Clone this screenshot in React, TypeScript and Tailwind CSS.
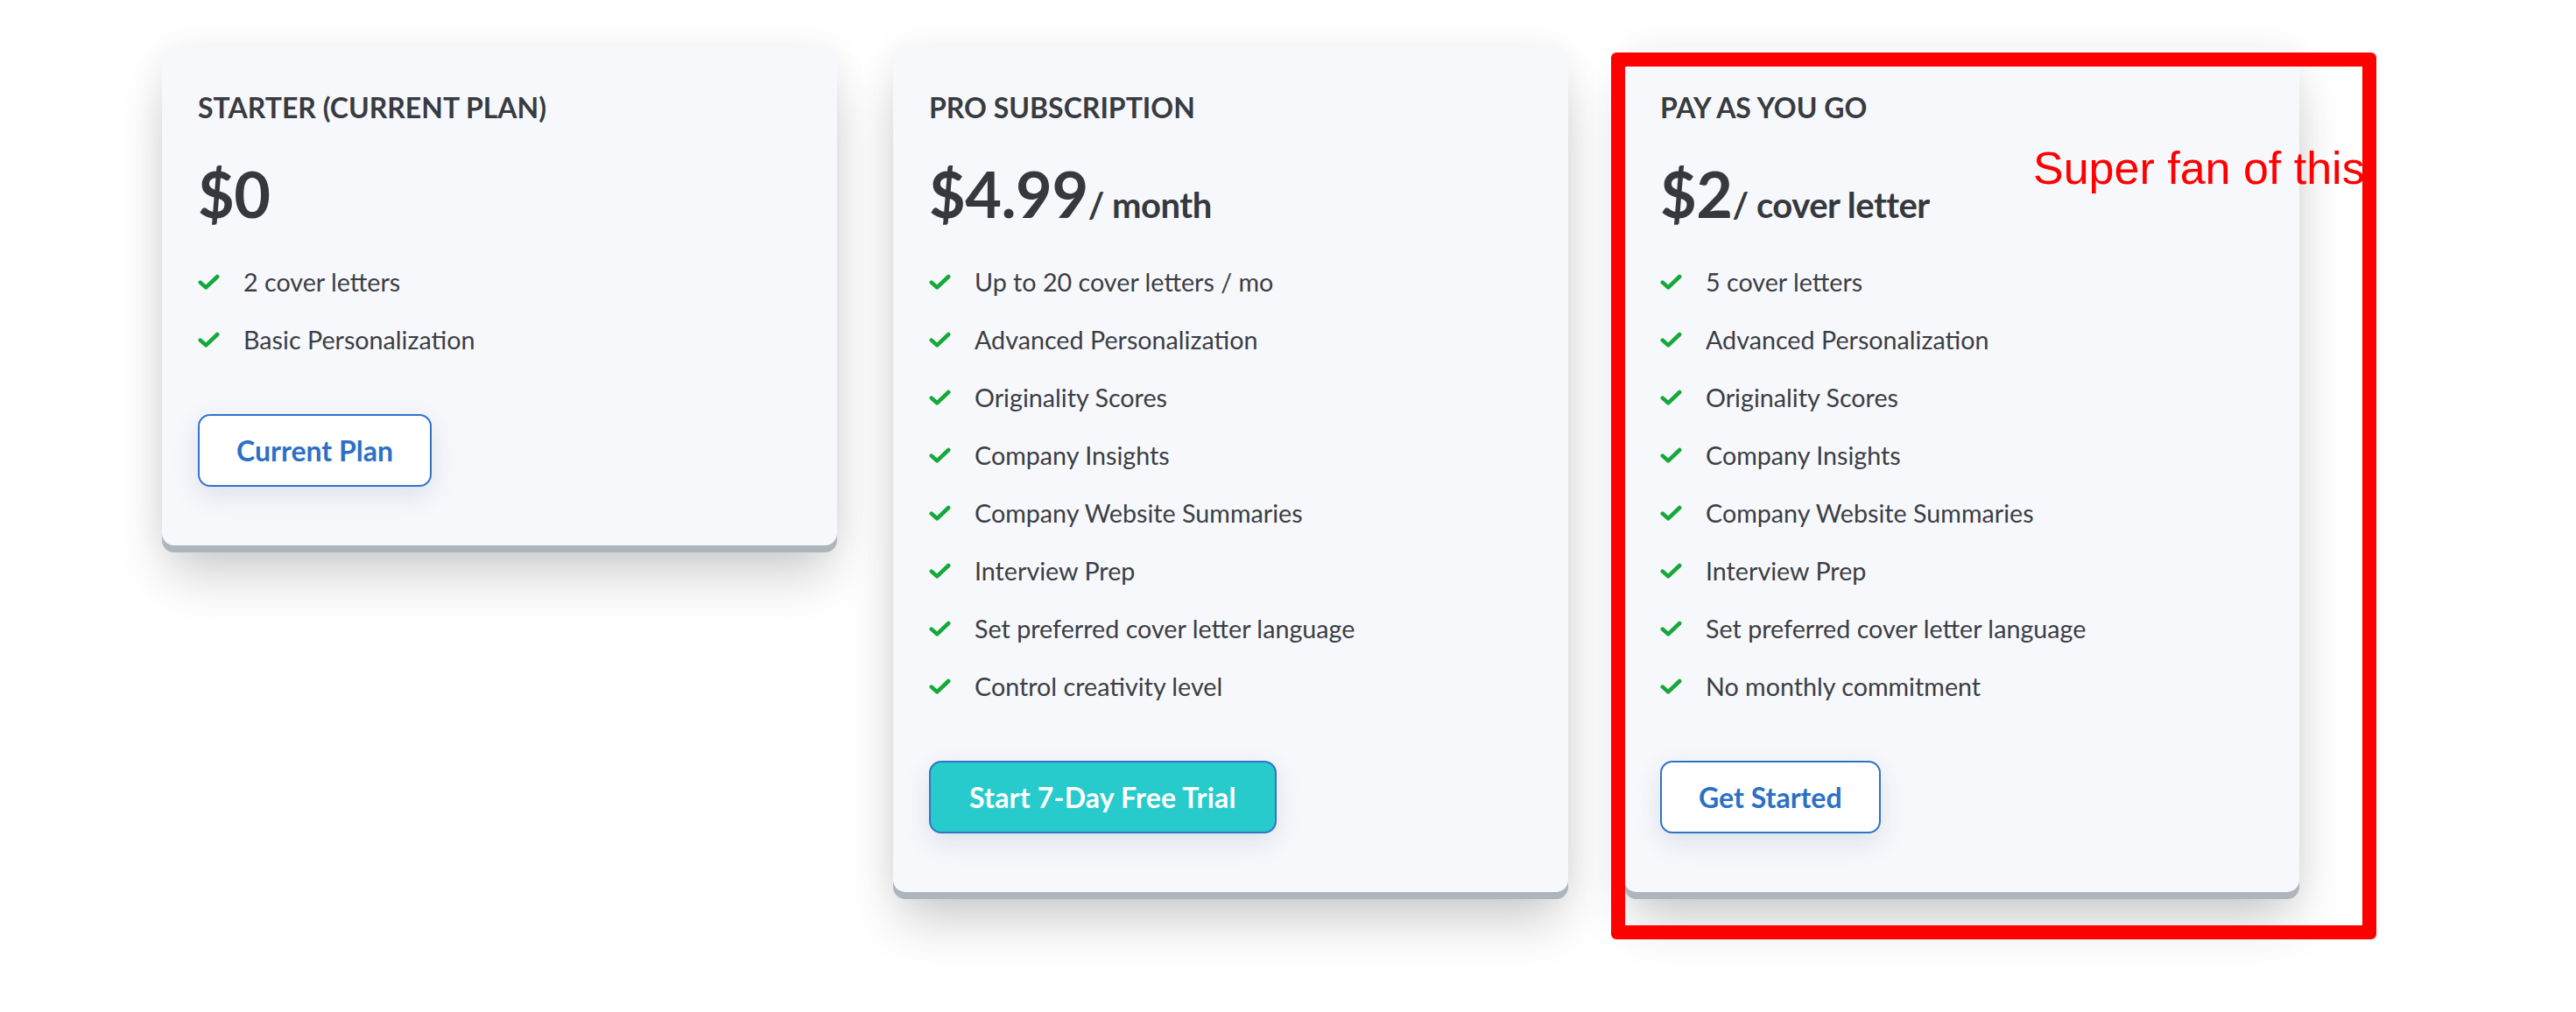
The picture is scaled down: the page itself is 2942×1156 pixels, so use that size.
import React from "react";

type Plan = {
  title: string;
  price: string;
  unit?: string;
  features: string[];
  button: string;
  primary?: boolean;
};

const plans: Plan[] = [
  {
    title: "STARTER (CURRENT PLAN)",
    price: "$0",
    features: ["2 cover letters", "Basic Personalization"],
    button: "Current Plan",
  },
  {
    title: "PRO SUBSCRIPTION",
    price: "$4.99",
    unit: "/ month",
    features: [
      "Up to 20 cover letters / mo",
      "Advanced Personalization",
      "Originality Scores",
      "Company Insights",
      "Company Website Summaries",
      "Interview Prep",
      "Set preferred cover letter language",
      "Control creativity level",
    ],
    button: "Start 7-Day Free Trial",
    primary: true,
  },
  {
    title: "PAY AS YOU GO",
    price: "$2",
    unit: "/ cover letter",
    features: [
      "5 cover letters",
      "Advanced Personalization",
      "Originality Scores",
      "Company Insights",
      "Company Website Summaries",
      "Interview Prep",
      "Set preferred cover letter language",
      "No monthly commitment",
    ],
    button: "Get Started",
  },
];

function Check() {
  return (
    <svg width="25" height="19" viewBox="0 0 25 19" className="shrink-0 mr-[27px]" fill="none">
      <path
        d="M2.8 9.6 L9.2 15.4 L22.2 3"
        stroke="#16a83a"
        strokeWidth="4.6"
        strokeLinejoin="round"
        strokeLinecap="round"
      />
    </svg>
  );
}

function Card({ plan }: { plan: Plan }) {
  return (
    <div className="w-[771px] shrink-0 rounded-[14px] bg-[#f7f8fc] px-[41px] pt-[50px] pb-[67px] shadow-[0_8px_0_#adb5bd,0_40px_60px_-8px_rgba(0,0,0,0.2),0_0_40px_rgba(0,0,0,0.06)]">
      <h2 className="text-[32px] leading-[40px] font-bold text-[#383b40]">{plan.title}</h2>
      <div className="mt-[42px] flex items-baseline font-bold leading-none text-[#35383d]">
        <span className="text-[72px] leading-none tracking-[-0.5px]">{plan.price}</span>
        {plan.unit && <span className="text-[40px] leading-none tracking-[-0.5px]">{plan.unit}</span>}
      </div>
      <ul className="mt-[47px] flex flex-col gap-[30px]">
        {plan.features.map((f) => (
          <li key={f} className="flex h-[36px] items-center text-[28.7px] leading-[36px] text-[#3b3e44]">
            <Check />
            <span>{f}</span>
          </li>
        ))}
      </ul>
      <button
        className={
          plan.primary
            ? "mt-[67px] h-[83px] rounded-[14px] border-2 border-[#2f74c9] bg-[#27cbcb] px-[44px] text-[32px] font-bold tracking-[0.2px] text-white shadow-[0_10px_30px_rgba(40,60,100,0.12)]"
            : "mt-[67px] h-[83px] rounded-[14px] border-2 border-[#2f74c9] bg-white px-[42px] text-[32px] font-bold text-[#2c70c6] shadow-[0_10px_30px_rgba(40,60,100,0.12)]"
        }
      >
        {plan.button}
      </button>
    </div>
  );
}

export default function App() {
  return (
    <div className="relative min-h-[1156px] w-[2942px] overflow-hidden bg-white font-['Lato',sans-serif]">
      <div className="flex items-start gap-[64px] pl-[185px] pt-[53px]">
        {plans.map((p) => (
          <Card key={p.title} plan={p} />
        ))}
      </div>
      <span className="absolute left-[2322px] top-[166px] whitespace-nowrap font-['Liberation_Sans',Arial,sans-serif] text-[52px] leading-[52px] text-[#ff0000]">
        Super fan of this
      </span>
      <div className="pointer-events-none absolute left-[1840px] top-[60px] h-[1013px] w-[874px] rounded-[6px] border-[16px] border-[#ff0000]" />
    </div>
  );
}
